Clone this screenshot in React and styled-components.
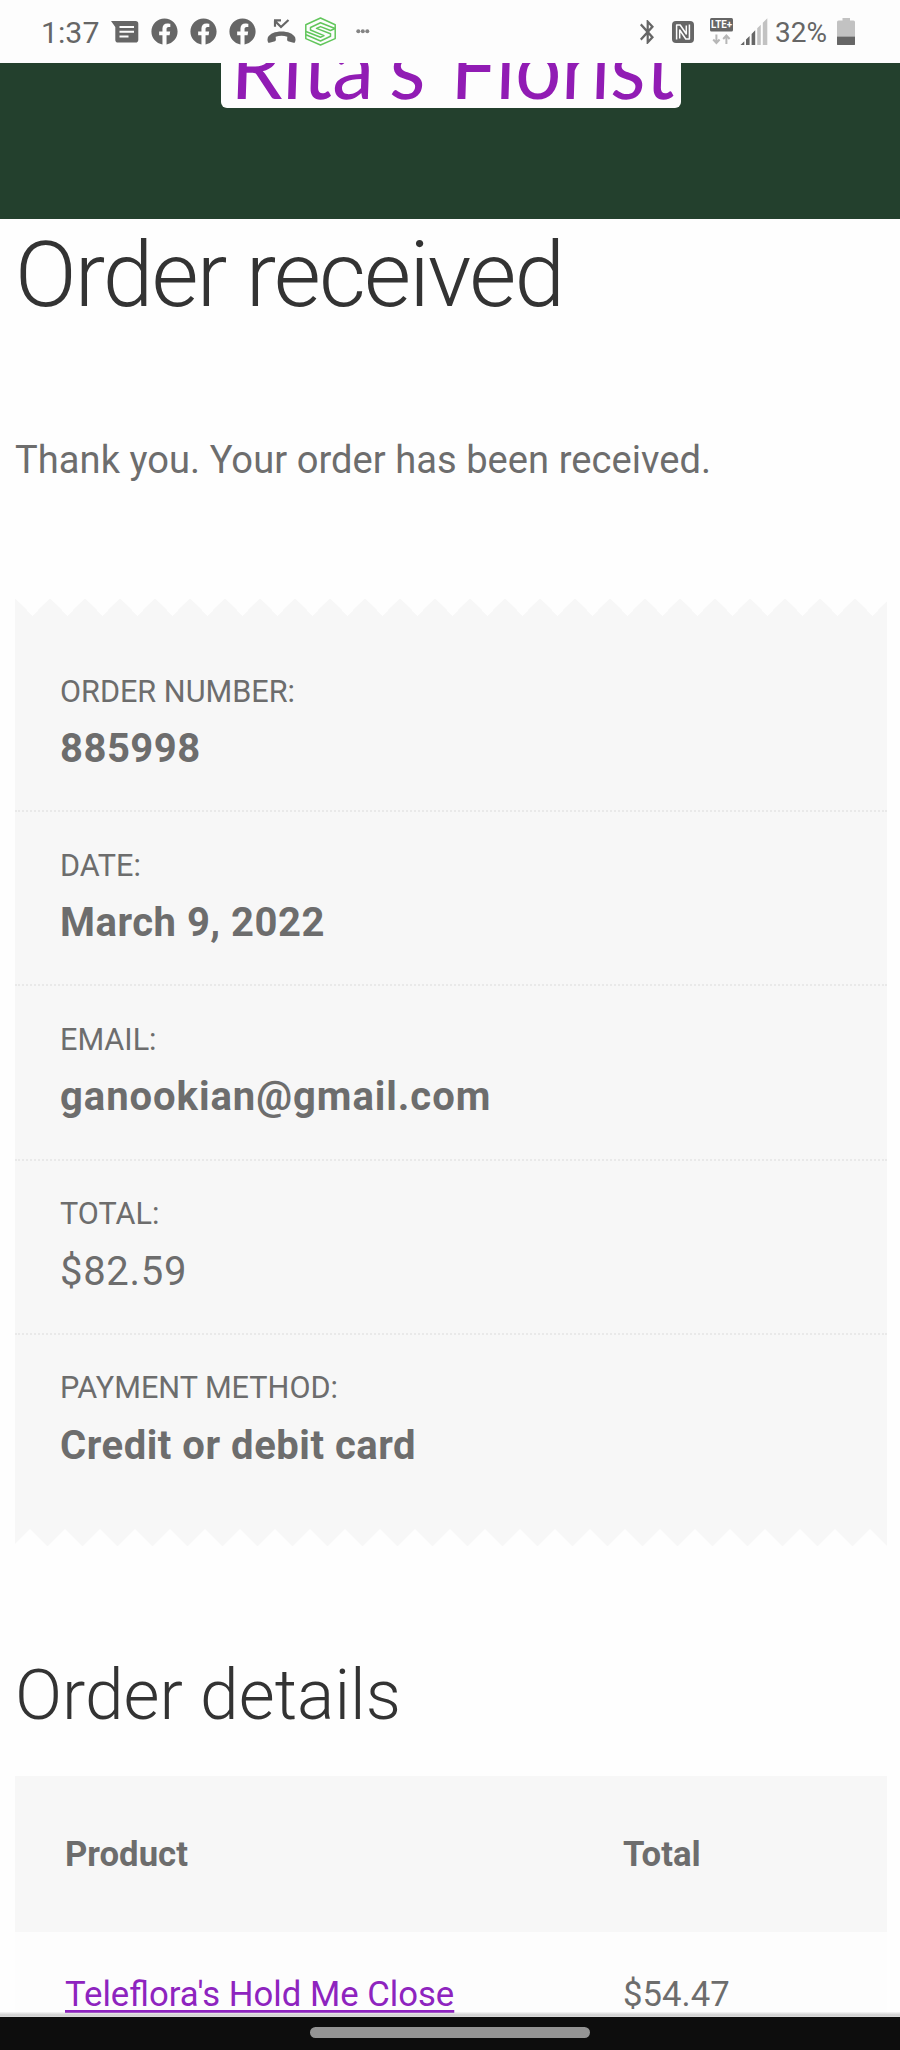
import React from "react";
import styled, { createGlobalStyle } from "styled-components";
import { FaFacebook } from "react-icons/fa";

const ink = "#6d6d6d";
const panel = "#f7f7f7";

const GlobalStyle = createGlobalStyle`
  * { box-sizing: border-box; }
  body { margin: 0; background: #fefefe; }
`;

const Screen = styled.div`
  display: flex;
  flex-direction: column;
  width: 900px;
  height: 2050px;
  overflow: hidden;
  color: ${ink};
  font-family: Roboto, sans-serif;
`;

const StatusBar = styled.header`
  flex: none;
  display: flex;
  justify-content: space-between;
  height: 63px;
  padding: 0 45px 0 41px;
  background: #fdfdfd;
  color: #666;
`;

const StatusGroup = styled.div`
  display: flex;
  align-items: flex-start;
`;

const StatusText = styled.span`
  margin-top: ${(p) => p.$top}px;
  margin-left: ${(p) => p.$gap || 0}px;
  width: ${(p) => p.$width}px;
  font-size: ${(p) => p.$size}px;
  line-height: 36px;
  white-space: nowrap;
`;

const Glyph = styled.svg`
  display: block;
  flex: none;
  margin-top: ${(p) => p.$top}px;
  margin-left: ${(p) => p.$gap || 0}px;
  fill: currentColor;
`;

const FacebookMark = styled(FaFacebook)`
  flex: none;
  width: 27px;
  height: 27px;
  margin: 17.5px 0 0 12px;
`;

const SiteHeader = styled.div`
  flex: none;
  display: flex;
  justify-content: center;
  align-items: flex-start;
  height: 156px;
  padding-left: 2px;
  background: #23402d;
  overflow: hidden;
`;

const Logo = styled.div`
  display: flex;
  width: 460px;
  height: 45px;
  padding-left: 9px;
  border-radius: 0 0 6px 6px;
  background: #fdfdfd;
  overflow: hidden;
`;

const LogoWord = styled.span`
  flex: none;
  width: ${(p) => p.$width}px;
  height: 78px;
  margin-top: -37px;
  color: #911cb4;
  font: 400 88px/78px Lato, sans-serif;
  white-space: nowrap;
  transform: scaleX(${(p) => p.$stretch}) skewX(-2deg);
  transform-origin: 0 73px;
`;

const Content = styled.main`
  flex: 1;
  min-height: 0;
  display: flex;
  flex-direction: column;
  padding: 1px 13px 0 15px;
  overflow: hidden;
`;

const PageTitle = styled.h1`
  flex: none;
  margin: 0;
  color: #333;
  font-size: 91px;
  font-weight: 300;
  letter-spacing: -1.85px;
  line-height: 110px;
`;

const Notice = styled.p`
  flex: none;
  margin: 102px 0 109px;
  font-size: 38.1px;
  letter-spacing: 0.05px;
  line-height: 57px;
`;

const Receipt = styled.ul`
  flex: none;
  margin: 0;
  padding: 0;
  list-style: none;
  background: ${panel};

  &::before,
  &::after {
    content: "";
    display: block;
  }
  &::before {
    height: 40px;
    background: conic-gradient(from -45deg at 50% 100%, #fefefe 90deg, transparent 0) 0 0 / 35px 17.5px repeat-x;
  }
  &::after {
    height: 37px;
    background: conic-gradient(from 135deg at 50% 0, #fefefe 90deg, transparent 0) -2.5px 100% / 35px 17px repeat-x;
  }
`;

const ReceiptItem = styled.li`
  display: flex;
  flex-direction: column;
  gap: 7.5px;
  height: 174.2px;
  padding: 33.5px 45px 0;
  border-bottom: 2px dotted #e9e9e9;

  &:last-child { border-bottom: 0; }
`;

const ItemLabel = styled.span`
  font-size: 30.6px;
  line-height: 40px;
  text-transform: uppercase;
`;

const ItemValue = styled.span`
  font-size: 40px;
  font-weight: ${(p) => (p.$plain ? 400 : 700)};
  letter-spacing: ${(p) => p.$tracking}px;
  line-height: 60px;
`;

const SectionTitle = styled.h2`
  flex: none;
  margin: 106px 0 0;
  color: #333;
  font-size: 69.5px;
  font-weight: 300;
  letter-spacing: 0.05px;
  line-height: 88px;
`;

const OrderTable = styled.div`
  flex: none;
  margin-top: 36px;
  font-size: 34.7px;
`;

const TableRow = styled.div`
  display: grid;
  grid-template-columns: 558px 1fr;
  padding: ${(p) => (p.$head ? "54px 50px 54px" : "38px 50px 54px")};
  background: ${(p) => (p.$head ? panel : "#fdfdfd")};
  font-weight: ${(p) => (p.$head ? 700 : 400)};
  line-height: 48px;
`;

const ProductLink = styled.a`
  color: #8e24bf;
  text-decoration: underline;
  text-decoration-thickness: 3px;
  text-underline-offset: 4px;
  text-decoration-skip-ink: none;
`;

const GestureBar = styled.footer`
  flex: none;
  position: relative;
  display: flex;
  justify-content: center;
  height: 33px;
  padding-top: 10px;
  background: #0d0d0d;

  &::before {
    content: "";
    position: absolute;
    inset: -5px 0 auto;
    height: 5px;
    background: linear-gradient(rgba(205, 205, 205, 0.15), #cfcfcf 60%, #dcdcdc);
  }
`;

const GesturePill = styled.div`
  width: 280px;
  height: 11px;
  border-radius: 6px;
  background: #949494;
`;

const LteLabel = styled.text`
  fill: #fdfdfd;
  font: 700 10.5px Roboto, sans-serif;
`;

const MessageIcon = () => (
  <Glyph $top={20.5} $gap={9} width="28" height="22" viewBox="0 0 28 22">
    <path d="M0 0H24.5Q27.3 0 27.3 2.8V18.7Q27.3 21.5 24.5 21.5H7Q4.3 21.5 4.3 18.7V6Z" />
    <path d="M8.5 6H23M8.5 10.8H23M8.5 15.6H17.5" stroke="#fdfdfd" strokeWidth="2" />
  </Glyph>
);

const MissedCallIcon = () => (
  <Glyph $top={19} $gap={11} width="29" height="24.5" viewBox="0 0 29 24.5">
    <path d="M8 1.8V7.8M7 1.4H14M8 2 14 8 21.5 1" fill="none" stroke="currentColor" strokeWidth="2.2" />
    <path d="M14.5 12.5C21 12.5 26 14.5 28.2 18.5Q29 21 28 23.2Q27.6 24 26.5 23.7L21 22.2Q20 21.8 20.1 20.6L20.3 17.7Q14.5 15.6 8.7 17.7L8.9 20.6Q9 21.8 8 22.2L2.5 23.7Q1.4 24 1 23.2Q0 21 .8 18.5C3 14.5 8 12.5 14.5 12.5Z" />
  </Glyph>
);

const HexagonIcon = () => (
  <Glyph $top={16.5} $gap={9} width="31" height="29" viewBox="0 0 31 29">
    <g fill="none" stroke="#62c65c" strokeWidth="1.5" strokeLinejoin="round">
      <path d="M15.5 1 30.2 7.8V21.6L15.5 28 .8 21.6V7.8Z" />
      <path d="M30 11.5 15.5 5.8 5.5 10.5V13L19 18.6 15.5 20.2 1 14.5" />
      <path d="M30 11.5 25.5 13.5 15.5 9.6 11.5 11.4 25.5 16.8V19.3L15.5 24 1 17.8" />
    </g>
  </Glyph>
);

const MoreIcon = () => (
  <Glyph $top={28.7} $gap={20.5} width="14" height="5" viewBox="0 0 14 5" opacity="0.8">
    <circle cx="2.3" cy="2.3" r="2" />
    <circle cx="6.8" cy="2.3" r="2" />
    <circle cx="11.3" cy="2.3" r="2" />
  </Glyph>
);

const BluetoothIcon = () => (
  <Glyph $top={20} width="14" height="24" viewBox="5 2 12.71 20" preserveAspectRatio="none">
    <path d="M17.71 7.71 12 2h-1v7.59L6.41 5 5 6.41 10.59 12 5 17.59 6.41 19 11 14.41V22h1l5.71-5.71-4.3-4.29 4.3-4.29zM13 5.83l1.88 1.88L13 9.59V5.83zm1.88 10.46L13 18.17v-3.76l1.88 1.88z" />
  </Glyph>
);

const NfcIcon = () => (
  <Glyph $top={21} $gap={18} width="22" height="22" viewBox="0 0 22 22">
    <rect width="22" height="22" rx="4" />
    <g fill="none" stroke="#fdfdfd" strokeWidth="1.5" strokeLinejoin="round">
      <path d="M4.6 18.5V4H8.2L14.3 13V4.5" />
      <path d="M17.4 3.5V18H13.8L7.7 9V17.5" />
    </g>
  </Glyph>
);

const LteIcon = () => (
  <Glyph $top={18} $gap={16} width="23" height="27" viewBox="0 0 23 27">
    <rect width="23" height="13.5" rx="1.5" />
    <LteLabel x="1" y="10.4" textLength="21" lengthAdjust="spacingAndGlyphs">LTE+</LteLabel>
    <path d="M6.4 16.5V24.5M3.2 21.5 6.4 25 9.6 21.5M16.4 26V18M13.2 21 16.4 17.5 19.6 21" fill="none" stroke="#b7b7b7" strokeWidth="2" />
  </Glyph>
);

const SignalIcon = () => (
  <Glyph $top={18} $gap={7} width="28" height="27" viewBox="0 0 28 27">
    <path d="M.5 27 4.3 23.2V27ZM6 27V21.5L9.6 17.9V27ZM11.6 27V15.9L15.2 12.3V27Z" />
    <path fill="#c2c2c2" d="M17.2 27V10.3L20.8 6.7V27ZM22.8 27V4.7L27.3.2V27Z" />
  </Glyph>
);

const BatteryIcon = () => (
  <Glyph $top={17.5} width="18" height="27.5" viewBox="0 0 18 27.5">
    <path fill="#c2c2c2" d="M5.5 0H13V2.5H16.5Q18 2.5 18 4V18.5H0V4Q0 2.5 1.5 2.5H5.5Z" />
    <path d="M0 18.5H18V26Q18 27.5 16.5 27.5H1.5Q0 27.5 0 26Z" />
  </Glyph>
);

const details = [
  { label: "Order number:", value: "885998", tracking: 0.5 },
  { label: "Date:", value: "March 9, 2022", tracking: 0.5 },
  { label: "Email:", value: "ganookian@gmail.com", tracking: 0.95 },
  { label: "Total:", value: "$82.59", tracking: 0.7, plain: true },
  { label: "Payment method:", value: "Credit or debit card", tracking: 0.53 },
];

export default function App() {
  return (
    <Screen>
      <GlobalStyle />
      <StatusBar>
        <StatusGroup>
          <StatusText $top={15} $size={30.3} $width={60.5}>1:37</StatusText>
          <MessageIcon />
          <FacebookMark />
          <FacebookMark />
          <FacebookMark />
          <MissedCallIcon />
          <HexagonIcon />
          <MoreIcon />
        </StatusGroup>
        <StatusGroup>
          <BluetoothIcon />
          <NfcIcon />
          <LteIcon />
          <SignalIcon />
          <StatusText $top={15} $gap={7} $size={28} $width={62}>32%</StatusText>
          <BatteryIcon />
        </StatusGroup>
      </StatusBar>
      <SiteHeader>
        <Logo>
          <LogoWord $width={220} $stretch={0.95}>Rita's</LogoWord>
          <LogoWord $width={225} $stretch={0.925}>Florist</LogoWord>
        </Logo>
      </SiteHeader>
      <Content>
        <PageTitle>Order received</PageTitle>
        <Notice>Thank you. Your order has been received.</Notice>
        <Receipt>
          {details.map((d) => (
            <ReceiptItem key={d.label}>
              <ItemLabel>{d.label}</ItemLabel>
              <ItemValue $plain={d.plain} $tracking={d.tracking}>{d.value}</ItemValue>
            </ReceiptItem>
          ))}
        </Receipt>
        <SectionTitle>Order details</SectionTitle>
        <OrderTable>
          <TableRow $head>
            <span>Product</span>
            <span>Total</span>
          </TableRow>
          <TableRow>
            <ProductLink>Teleflora's Hold Me Close</ProductLink>
            <span>$54.47</span>
          </TableRow>
        </OrderTable>
      </Content>
      <GestureBar>
        <GesturePill />
      </GestureBar>
    </Screen>
  );
}
